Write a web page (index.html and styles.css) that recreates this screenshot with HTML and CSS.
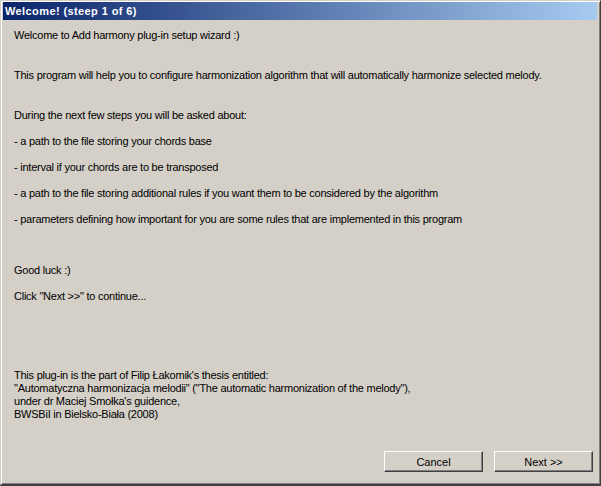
FILE: index.html
```html
<!DOCTYPE html>
<html lang="en">
<head>
    <meta charset="UTF-8">
    <title>Welcome! (steep 1 of 6)</title>
    <link rel="stylesheet" href="styles.css">
</head>
<body>
    <div class="window">
        <div class="title-bar">Welcome! (steep 1 of 6)</div>
        <div class="wizard-body">
            <p class="intro">Welcome to Add harmony plug-in setup wizard :)</p>
            <p class="para">This program will help you to configure harmonization algorithm that will automatically harmonize selected melody.</p>
            <p class="para">During the next few steps you will be asked about:</p>
            <p class="item">- a path to the file storing your chords base</p>
            <p class="item">- interval if your chords are to be transposed</p>
            <p class="item">- a path to the file storing additional rules if you want them to be considered by the algorithm</p>
            <p class="item">- parameters defining how important for you are some rules that are implemented in this program</p>
            <p class="luck">Good luck :)</p>
            <p class="item">Click "Next &gt;&gt;" to continue...</p>
            <div class="credits">
                This plug-in is the part of Filip Łakomik's thesis entitled:<br>
                "Automatyczna harmonizacja melodii" ("The automatic harmonization of the melody"),<br>
                under dr Maciej Smołka's guidence,<br>
                BWSBiI in Bielsko-Biała (2008)
            </div>
        </div>
        <div class="button-row">
            <button class="win-btn">Cancel</button>
            <button class="win-btn next">Next &gt;&gt;</button>
        </div>
    </div>
</body>
</html>
```

FILE: styles.css
```css
body {
    margin: 0;
    background-color: #d4d0c8;
    font-family: "Liberation Sans", Arial, sans-serif;
    font-size: 11px;
    line-height: 13px;
    color: #000;
}
.window {
    width: 601px;
    height: 486px;
    box-sizing: border-box;
    display: flex;
    flex-direction: column;
    background-color: #d4d0c8;
    border-top: 1px solid #d4d0c8;
    border-left: 1px solid #d4d0c8;
    border-right: 1px solid #404040;
    border-bottom: 2px solid #404040;
    box-shadow: inset 1px 1px #fff, inset -1px -1px #808080;
    padding: 1px 3px 2px 2px;
}
.title-bar {
    height: 18px;
    line-height: 18px;
    padding-left: 2px;
    color: #fff;
    font-weight: bold;
    font-size: 11px;
    letter-spacing: 0.4px;
    background: linear-gradient(to right, #0a246a, #a6caf0);
}
.wizard-body {
    flex: 1;
    padding-left: 11px;
    letter-spacing: -0.24px;
}
.wizard-body p {
    margin: 0;
}
.intro {
    margin-top: 9px !important;
}
.para {
    margin-top: 27px !important;
}
.item {
    margin-top: 13px !important;
}
.luck {
    margin-top: 38px !important;
}
.credits {
    margin-top: 66px;
}
.button-row {
    display: flex;
    justify-content: flex-end;
    gap: 11px;
    padding: 0 4px 10px 0;
}
.win-btn {
    width: 99px;
    height: 21px;
    padding: 0;
    font-family: "Liberation Sans", Arial, sans-serif;
    font-size: 11px;
    color: #000;
    background-color: #d4d0c8;
    border-top: 1px solid #fff;
    border-left: 1px solid #fff;
    border-right: 1px solid #404040;
    border-bottom: 1px solid #404040;
    box-shadow: inset -1px -1px #808080;
}
```
